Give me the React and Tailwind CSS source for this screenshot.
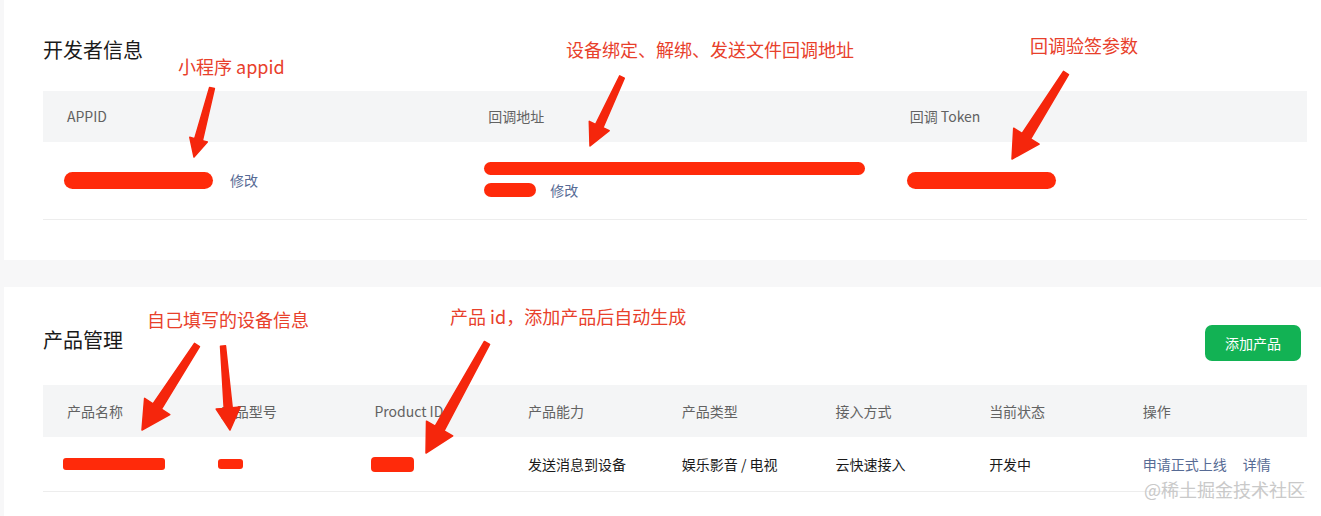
import React from "react";

function arrowPoints(x1, y1, x2, y2, headLen, headW, tailW, neckW) {
  const dx = x2 - x1;
  const dy = y2 - y1;
  const len = Math.hypot(dx, dy);
  const ux = dx / len;
  const uy = dy / len;
  const nx = -uy;
  const ny = ux;
  const bx = x2 - ux * headLen;
  const by = y2 - uy * headLen;
  const p = [
    [x1 + (nx * tailW) / 2, y1 + (ny * tailW) / 2],
    [bx + (nx * neckW) / 2, by + (ny * neckW) / 2],
    [bx + (nx * headW) / 2, by + (ny * headW) / 2],
    [x2, y2],
    [bx - (nx * headW) / 2, by - (ny * headW) / 2],
    [bx - (nx * neckW) / 2, by - (ny * neckW) / 2],
    [x1 - (nx * tailW) / 2, y1 - (ny * tailW) / 2],
  ];
  return p.map((q) => q[0].toFixed(1) + "," + q[1].toFixed(1)).join(" ");
}

const arrows = [
  [212, 88, 194, 157, 18, 18, 5, 8],
  [622, 77, 590, 146, 22, 22, 5, 8],
  [1066, 73, 1012, 159, 27, 30, 6, 10],
  [197, 345, 142, 430, 28, 30, 6, 10],
  [223, 346, 230, 430, 22, 24, 5, 8],
  [487, 343, 426, 453, 28, 30, 6, 10],
];

function Bar({ className }) {
  return <span className={"inline-block rounded-full bg-[#ff2a0a] " + className} />;
}

function Note({ className, children }) {
  return (
    <div className={"absolute text-[18px] leading-[25px] text-[#e8402b] whitespace-nowrap " + className}>
      {children}
    </div>
  );
}

export default function App() {
  const headCell = "pl-[24px] text-[14px] text-[#626262]";
  const cols = "grid grid-cols-[153.7px_153.7px_153.7px_153.7px_153.7px_153.7px_153.7px_1fr]";
  return (
    <div className="relative w-[1321px] h-[516px] overflow-hidden bg-[#f7f7f8] pl-[4px] [font-family:'Noto_Sans_CJK_SC','Noto_Sans',sans-serif]">
      {/* Developer info card */}
      <section className="bg-white h-[260px] pl-[39px] pr-[14px] pt-[36px]">
        <h2 className="text-[20px] leading-[28px] text-[#1a1a1a]">开发者信息</h2>
        <div className="mt-[27px]">
          <div className="grid grid-cols-3 h-[51px] items-center bg-[#f4f5f6]">
            <div className={headCell}>APPID</div>
            <div className={headCell}>回调地址</div>
            <div className={headCell}>回调 Token</div>
          </div>
          <div className="grid grid-cols-3 h-[78px] items-center border-b border-[#ededed] text-[14px]">
            <div className="pl-[21px] flex items-center">
              <Bar className="w-[149px] h-[17px]" />
              <span className="ml-[17px] text-[#576b95]">修改</span>
            </div>
            <div className="pl-[20px] flex flex-col">
              <Bar className="w-[381px] h-[13px]" />
              <div className="flex items-center mt-[5px]">
                <Bar className="w-[52px] h-[14px]" />
                <span className="ml-[14px] text-[#576b95] leading-[20px]">修改</span>
              </div>
            </div>
            <div className="pl-[21px] flex items-center">
              <Bar className="w-[149px] h-[17px]" />
            </div>
          </div>
        </div>
      </section>

      {/* Product management card */}
      <section className="bg-white h-[240px] mt-[27px] pl-[39px] pr-[14px] pt-[38px]">
        <div className="flex items-start justify-between h-[36px]">
          <h2 className="mt-[1px] text-[20px] leading-[28px] text-[#1a1a1a]">产品管理</h2>
          <button className="mr-[6px] w-[96px] h-[36px] rounded-[7px] bg-[#12b254] text-white text-[14px]">
            添加产品
          </button>
        </div>
        <div className="mt-[24px]">
          <div className={cols + " h-[52px] items-center bg-[#f4f5f6]"}>
            <div className={headCell}>产品名称</div>
            <div className={headCell}>产品型号</div>
            <div className={headCell}>Product ID</div>
            <div className={headCell}>产品能力</div>
            <div className={headCell}>产品类型</div>
            <div className={headCell}>接入方式</div>
            <div className={headCell}>当前状态</div>
            <div className={headCell}>操作</div>
          </div>
          <div className={cols + " h-[55px] items-center border-b border-[#ededed] text-[14px] text-[#1a1a1a]"}>
            <div className="pl-[20px] flex items-center">
              <Bar className="w-[102px] h-[12px] !rounded-[3px]" />
            </div>
            <div className="pl-[21px] flex items-center">
              <Bar className="w-[25px] h-[10px] !rounded-[3px]" />
            </div>
            <div className="pl-[21px] flex items-center">
              <Bar className="w-[43px] h-[15px] !rounded-[4px]" />
            </div>
            <div className="pl-[24px]">发送消息到设备</div>
            <div className="pl-[24px]">娱乐影音 / 电视</div>
            <div className="pl-[24px]">云快速接入</div>
            <div className="pl-[24px]">开发中</div>
            <div className="pl-[24px] flex text-[#576b95]">
              <span>申请正式上线</span>
              <span className="ml-[16px]">详情</span>
            </div>
          </div>
        </div>
      </section>

      {/* Annotations overlay */}
      <Note className="left-[178px] top-[54px]">小程序 appid</Note>
      <Note className="left-[566px] top-[37px]">设备绑定、解绑、发送文件回调地址</Note>
      <Note className="left-[1030px] top-[33px]">回调验签参数</Note>
      <Note className="left-[147px] top-[307px]">自己填写的设备信息</Note>
      <Note className="left-[450px] top-[304px]">产品 id，添加产品后自动生成</Note>

      <svg className="absolute left-0 top-0 pointer-events-none" width="1321" height="516" viewBox="0 0 1321 516">
        {arrows.map((a, i) => (
          <polygon
            key={i}
            points={arrowPoints(...a)}
            fill="#f5260c"
            stroke="#f5260c"
            strokeWidth="1.5"
            strokeLinejoin="round"
          />
        ))}
      </svg>

      <div className="absolute left-[1144px] top-[476px] text-[18px] leading-[26px] text-[#c9c9c9] whitespace-nowrap">
        @稀土掘金技术社区
      </div>
    </div>
  );
}
